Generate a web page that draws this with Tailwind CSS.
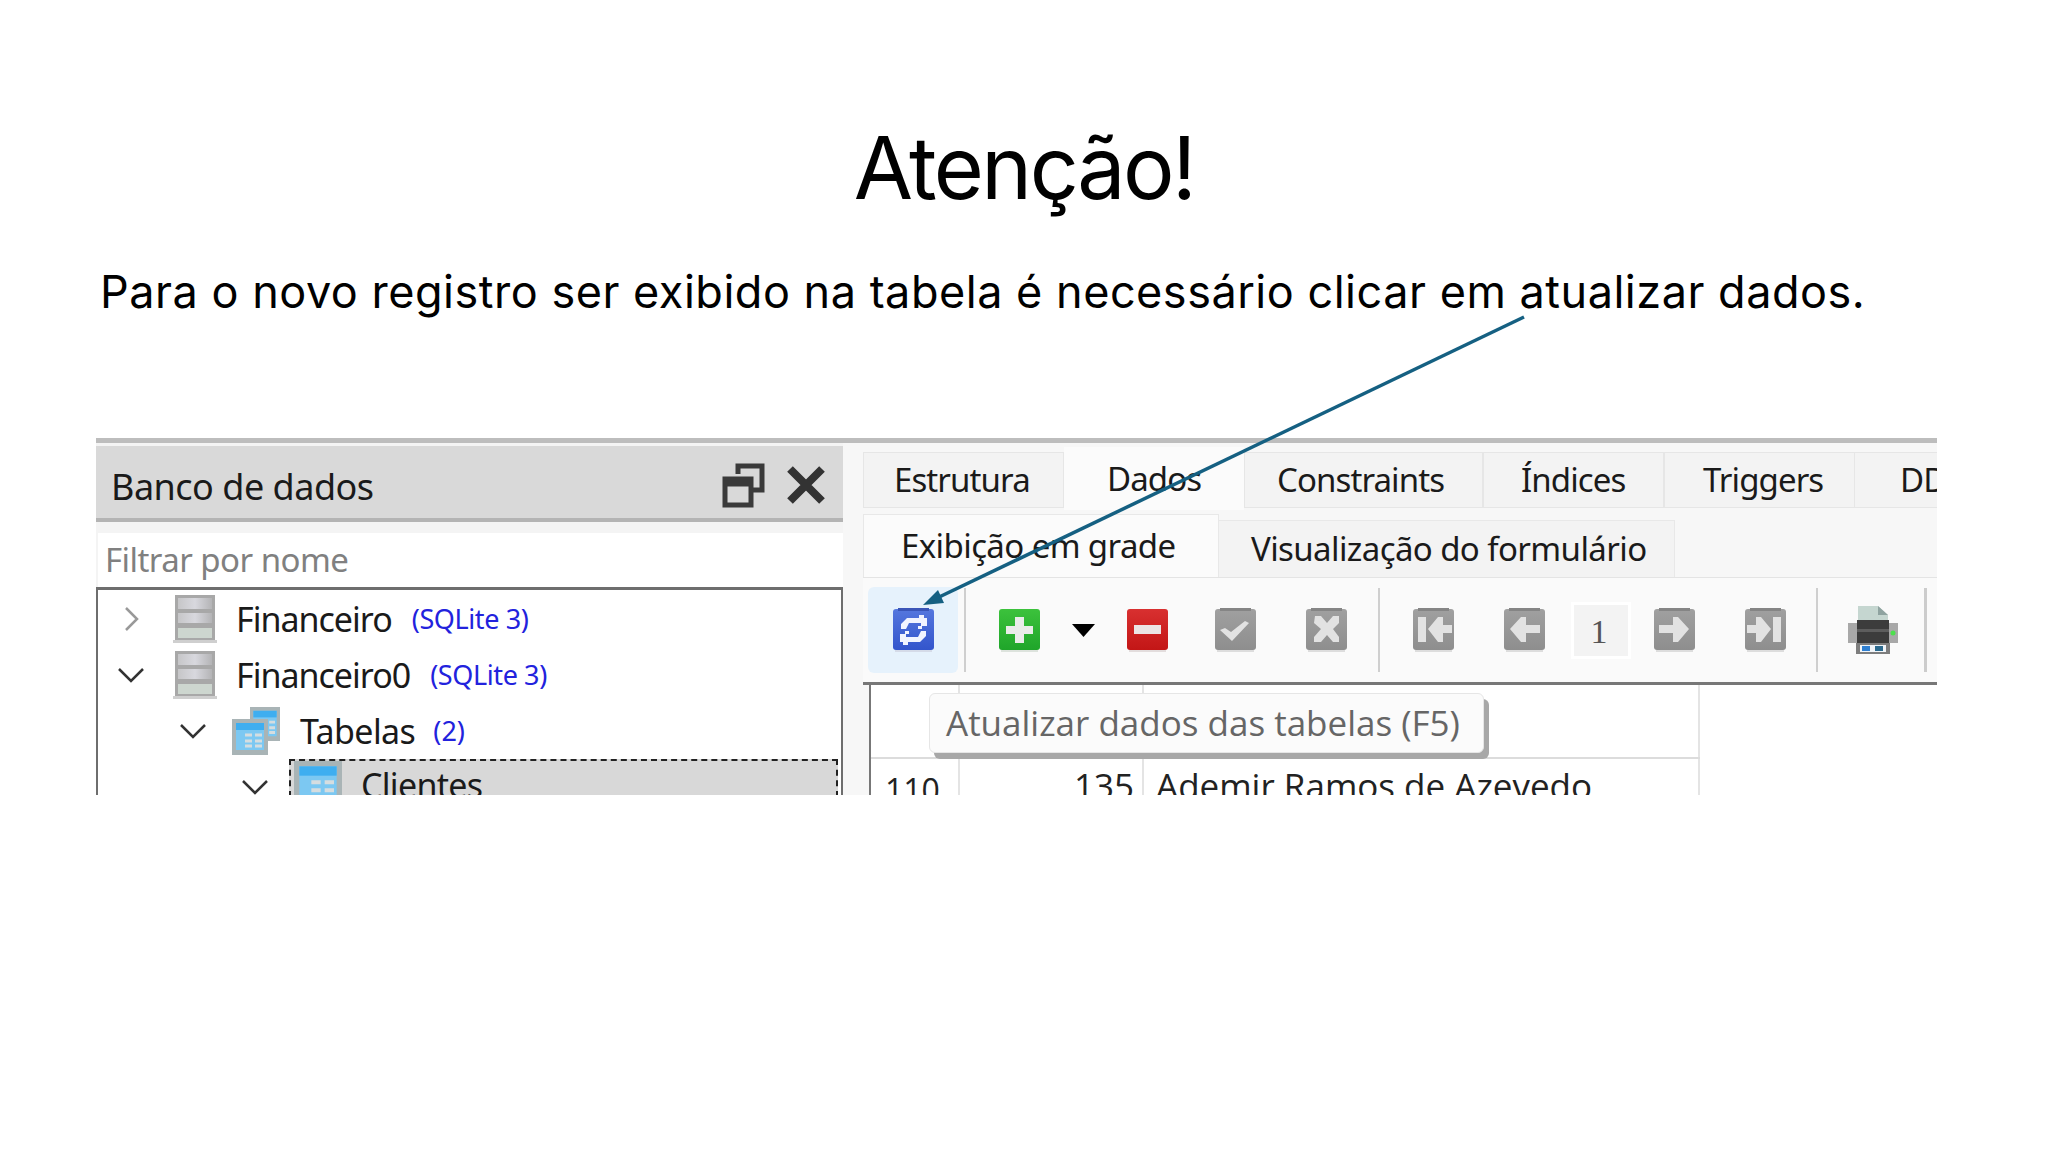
<!DOCTYPE html>
<html lang="pt-BR">
<head>
<meta charset="UTF-8" />
<title>Atenção!</title>
<script src="https://cdn.jsdelivr.net/npm/@tailwindcss/browser@4"></script>
</head>
<body class="bg-white">
<svg width="0" height="0" class="absolute">
  <defs>
    <linearGradient id="gray" x1="0" y1="0" x2="0" y2="1"><stop offset="0" stop-color="#a0a0a0"/><stop offset="1" stop-color="#8e8e8e"/></linearGradient>
    <linearGradient id="blue" x1="0" y1="0" x2="0" y2="1"><stop offset="0" stop-color="#5577de"/><stop offset="1" stop-color="#3355cc"/></linearGradient>
    <linearGradient id="green" x1="0" y1="0" x2="0" y2="1"><stop offset="0" stop-color="#3cc23c"/><stop offset="1" stop-color="#1fa52a"/></linearGradient>
    <linearGradient id="red" x1="0" y1="0" x2="0" y2="1"><stop offset="0" stop-color="#d83030"/><stop offset="1" stop-color="#c31616"/></linearGradient>
    <linearGradient id="drum" x1="0" y1="0" x2="1" y2="0"><stop offset="0" stop-color="#c6c6c8"/><stop offset="0.5" stop-color="#d8d8de"/><stop offset="1" stop-color="#b4b4b6"/></linearGradient>
    <symbol id="db" viewBox="0 0 48 48">
      <rect x="4" y="0" width="40" height="46" fill="#a8a8a8"/>
      <rect x="7" y="3" width="34" height="11" fill="url(#drum)"/>
      <rect x="7" y="18" width="34" height="10" fill="url(#drum)"/>
      <rect x="7" y="33" width="34" height="10" fill="#cdd6cf"/>
      <rect x="2" y="45" width="44" height="3" fill="#cfcfcf"/>
    </symbol>
    <symbol id="tbl" viewBox="0 0 36 36">
      <rect x="0" y="0" width="36" height="36" fill="#a9b4b6"/>
      <rect x="4" y="4" width="28" height="27" fill="#7cc8f2"/>
      <rect x="4" y="4" width="28" height="7" fill="#3eaef0"/>
      <path d="M13 16h7M23 16h7M13 22h7M23 22h7M13 27h7M23 27h7" stroke="#d5dde0" stroke-width="3"/>
    </symbol>
    <symbol id="chev-down" viewBox="0 0 28 16"><path d="M2 2 14 14 26 2" fill="none" stroke="#333" stroke-width="2.500"/></symbol>
    <symbol id="gray-btn" viewBox="0 0 43 44">
      <rect x="1" y="1" width="41" height="41" rx="3" fill="url(#gray)"/>
      <rect x="6" y="0" width="31" height="3" fill="#858585"/>
      <rect x="3" y="42" width="37" height="2" fill="#dddddd"/>
    </symbol>
  </defs>
</svg>

<div class="relative w-[2048px] h-[1152px] overflow-hidden bg-white text-black font-['Open_Sans',sans-serif]">

  <h1 class="pt-[112px] text-center text-[86px] leading-[112px] tracking-[-2.5px] font-normal font-['Inter',sans-serif]">Atenção!</h1>
  <p class="mt-[38px] pl-[100px] text-[45px] leading-[60px] whitespace-nowrap tracking-[0.52px] font-['Inter',sans-serif]">Para o novo registro ser exibido na tabela é necessário clicar em atualizar dados.</p>

  <!-- screenshot do programa, cortado embaixo -->
  <div class="ml-[96px] mt-[116px] w-[1841px] h-[357px] overflow-hidden bg-[#f4f4f4] text-[#1a1a1a] font-['Noto_Sans',sans-serif]">
    <div class="h-[5px] bg-[#bdbdbd]"></div>
    <div class="flex h-[352px]">

      <!-- painel esquerdo -->
      <div class="w-[747px] shrink-0 flex flex-col">
        <div class="shrink-0 mt-[3px] h-[76px] flex items-center pl-[15px] pr-[17px] bg-[#d9d9d9] border-b-4 border-[#b4b4b4]">
          <span class="pt-[10px] text-[36px] tracking-[-0.5px] flex-1">Banco de dados</span>
          <svg class="mt-[6px] w-[44px] h-[46px]" viewBox="0 0 44 46" fill="none" stroke="#3a3a3a" stroke-width="5">
            <path d="M16 12V4h24v24h-10"/><rect x="3" y="17" width="26" height="26"/><path d="M3 20h26" stroke-width="9"/>
          </svg>
          <svg class="ml-[20px] mt-[6px] w-[40px] h-[40px]" viewBox="0 0 40 40" fill="none" stroke="#333" stroke-width="8"><path d="M4 4l32 32M36 4 4 36"/></svg>
        </div>
        <div class="shrink-0 mt-[11px] ml-[2px] h-[54px] bg-white flex items-center pl-[7px] text-[33px] tracking-[-0.55px] text-[#808080]">Filtrar por nome</div>
        <div class="flex-1 min-h-0 overflow-hidden pt-[1px] bg-white border-t-[3px] border-l-2 border-r-2 border-[#6e6e6e] pr-[3px]">
          <div class="h-[56px] flex items-center">
            <svg class="ml-[26px] w-[15px] h-[26px]" viewBox="0 0 15 26"><path d="M2 2 13 13 2 24" fill="none" stroke="#999" stroke-width="2.500"/></svg>
            <svg class="ml-[32px] w-[48px] h-[48px]"><use href="#db"/></svg>
            <span class="ml-[17px] text-[34px] tracking-[-1px]">Financeiro</span>
            <span class="ml-[20px] text-[27px] tracking-[-0.4px] text-[#2222dd]">(SQLite 3)</span>
          </div>
          <div class="h-[56px] flex items-center">
            <svg class="ml-[19px] w-[28px] h-[16px]"><use href="#chev-down"/></svg>
            <svg class="ml-[26px] w-[48px] h-[48px]"><use href="#db"/></svg>
            <span class="ml-[17px] text-[34px] tracking-[-1px]">Financeiro0</span>
            <span class="ml-[20px] text-[27px] tracking-[-0.4px] text-[#2222dd]">(SQLite 3)</span>
          </div>
          <div class="h-[56px] flex items-center">
            <svg class="ml-[81px] w-[28px] h-[16px]"><use href="#chev-down"/></svg>
            <svg class="ml-[25px] w-[50px] h-[48px]" viewBox="0 0 50 48">
              <svg x="18" y="0" width="30" height="34" viewBox="0 0 36 36" preserveAspectRatio="none"><use href="#tbl"/></svg>
              <svg x="0" y="12" width="36" height="36" viewBox="0 0 36 36"><use href="#tbl"/></svg>
            </svg>
            <span class="ml-[18px] text-[34px] tracking-[-0.6px]">Tabelas</span>
            <span class="ml-[18px] text-[27px] text-[#2222dd]">(2)</span>
          </div>
          <div class="h-[56px] flex items-start">
            <svg class="ml-[143px] mt-[20px] w-[28px] h-[16px]"><use href="#chev-down"/></svg>
            <div class="ml-[20px] flex-1 h-[70px] bg-[#d8d8d8] border-2 border-dashed border-[#222] flex items-start">
              <svg class="w-[48px] h-[48px] ml-[3px]"><use href="#tbl"/></svg>
              <span class="ml-[19px] text-[34px] tracking-[-0.7px] leading-[48px]">Clientes</span>
            </div>
          </div>
        </div>
      </div>

      <!-- painel direito -->
      <div class="flex-1 min-w-0 pl-[20px] flex flex-col bg-[#f7f7f7]">
        <div class="shrink-0 h-[67px] flex items-end text-[33px] tracking-[-0.9px] whitespace-nowrap">
          <div class="w-[201px] h-[56px] mb-[2px] flex items-center pl-[30px] bg-[#f3f3f3] border border-[#e6e6e6]">Estrutura</div>
          <div class="w-[180px] h-[63px] flex items-center pl-[43px] bg-[#fbfbfb]">Dados</div>
          <div class="w-[239px] h-[56px] mb-[2px] flex items-center pl-[32px] bg-[#f3f3f3] border border-[#e6e6e6]">Constraints</div>
          <div class="w-[181px] h-[56px] mb-[2px] flex items-center pl-[37px] bg-[#f3f3f3] border border-[#e6e6e6]">Índices</div>
          <div class="w-[191px] h-[56px] mb-[2px] flex items-center pl-[38px] bg-[#f3f3f3] border border-[#e6e6e6]">Triggers</div>
          <div class="flex-1 min-w-0 h-[56px] mb-[2px] flex items-center pl-[45px] overflow-hidden bg-[#f3f3f3] border-y border-[#e6e6e6]">DD</div>
        </div>
        <div class="shrink-0 h-[68px] flex items-end text-[33px] tracking-[-0.6px] whitespace-nowrap border-b border-[#e4e4e4]">
          <div class="w-[356px] h-[63px] flex items-center pl-[37px] bg-[#fbfbfb] border-x border-t border-[#e8e8e8]">Exibição em grade</div>
          <div class="w-[456px] h-[57px] flex items-center pl-[32px] bg-[#f3f3f3] border-r border-t border-[#e8e8e8]">Visualização do formulário</div>
        </div>

        <div class="shrink-0 h-[107px] flex items-center bg-[#fafafa] border-b-[3px] border-[#777]">
          <div class="ml-[5px] w-[90px] h-[86px] rounded-md bg-[#e6f2fc] flex items-center justify-center">
            <svg class="w-[43px] h-[44px]" viewBox="0 0 43 44">
              <rect x="1" y="1" width="41" height="41" rx="3" fill="url(#blue)"/>
              <rect x="6" y="0" width="31" height="3" fill="#3a55b8"/>
              <rect x="3" y="42" width="37" height="2" fill="#d5dbe8"/>
              <path d="M9 21v-5l6-6h12V7h5v3h3v8h-5v3h-4v-3h3v-3H17l-3 6zM34 23v5l-6 6H16v3h-5v-3H8v-8h5v-3h4v3h-3v3h12l3-6z" fill="#f1f4ff"/>
            </svg>
          </div>
          <div class="ml-[6px] w-[2px] h-[84px] bg-[#cfcfcf]"></div>
          <svg class="ml-[32px] w-[43px] h-[44px]" viewBox="0 0 43 44">
            <rect x="1" y="1" width="41" height="41" rx="3" fill="url(#green)"/>
            <rect x="3" y="42" width="37" height="2" fill="#dde3dd"/>
            <path d="M17 9h9v9h9v8h-9v9h-9v-9H8v-8h9z" fill="#e9ece9"/>
          </svg>
          <svg class="ml-[31px] w-[23px] h-[13px]" viewBox="0 0 23 13"><path d="M0 0h23L11.500 13z" fill="#000"/></svg>
          <svg class="ml-[31px] w-[43px] h-[44px]" viewBox="0 0 43 44">
            <rect x="1" y="1" width="41" height="41" rx="3" fill="url(#red)"/>
            <rect x="3" y="42" width="37" height="2" fill="#e3dddd"/>
            <rect x="8" y="17" width="27" height="9" fill="#ece4e4"/>
          </svg>
          <svg class="ml-[45px] w-[43px] h-[44px]" viewBox="0 0 43 44">
            <use href="#gray-btn"/>
            <path d="M6 22l5-2 6 4 14-11 4 2-17 18z" fill="#e2e2e2"/>
          </svg>
          <svg class="ml-[48px] w-[43px] h-[44px]" viewBox="0 0 43 44">
            <use href="#gray-btn"/>
            <path d="M10 8h6l6 7 6-7h6v7l-6 6 6 8v5h-6l-6-7-6 7h-7v-5l7-8-7-6z" fill="#e2e2e2"/>
          </svg>
          <div class="ml-[30px] w-[2px] h-[84px] bg-[#cfcfcf]"></div>
          <svg class="ml-[32px] w-[43px] h-[44px]" viewBox="0 0 43 44">
            <use href="#gray-btn"/>
            <path d="M6 9h8v25H6zM16 21 26 9h5v8h9v8h-9v9h-5z" fill="#e2e2e2"/>
          </svg>
          <svg class="ml-[48px] w-[43px] h-[44px]" viewBox="0 0 43 44">
            <use href="#gray-btn"/>
            <path d="M7 21 18 9h5v8h14v8H23v9h-5z" fill="#e2e2e2"/>
          </svg>
          <div class="ml-[25px] w-[60px] h-[57px] pt-[3px] pr-[4px] flex items-center justify-center bg-[#f3f3f3] border-[3px] border-white text-[34px] text-[#555] font-['Liberation_Serif',serif]">1</div>
          <svg class="ml-[22px] w-[43px] h-[44px]" viewBox="0 0 43 44">
            <use href="#gray-btn"/>
            <path d="M36 21 25 9h-5v8H6v8h14v9h5z" fill="#e2e2e2"/>
          </svg>
          <svg class="ml-[48px] w-[43px] h-[44px]" viewBox="0 0 43 44">
            <use href="#gray-btn"/>
            <path d="M37 9h-8v25h8zM27 21 17 9h-5v8H3v8h9v9h5z" fill="#e2e2e2"/>
          </svg>
          <div class="ml-[29px] w-[2px] h-[84px] bg-[#cfcfcf]"></div>
          <svg class="ml-[30px] w-[50px] h-[50px]" viewBox="0 0 50 50">
            <path d="M10 1h20l10 9v14H10z" fill="#c5d6d0"/><path d="M30 1l10 9H30z" fill="#8fa3a0"/>
            <rect x="0" y="18" width="50" height="20" fill="#a8a8a8"/>
            <rect x="9" y="15" width="32" height="23" fill="#3c3c3c"/><rect x="9" y="24" width="32" height="3" fill="#5d5d5d"/>
            <circle cx="45" cy="28" r="2.500" fill="#4de04d"/>
            <rect x="8" y="38" width="34" height="11" fill="#7d7d7d"/>
            <rect x="12" y="40" width="26" height="7" fill="#f0f4f8"/><rect x="14" y="41" width="8" height="5" fill="#2f7fd0"/><rect x="27" y="41" width="8" height="5" fill="#2c6a8e"/>
          </svg>
          <div class="ml-[26px] w-[3px] h-[84px] bg-[#cccccc]"></div>
        </div>

        <!-- grade de dados -->
        <div class="relative flex-1 min-h-0 ml-[6px] bg-white border-l-2 border-[#777] text-[35px] text-[#222] font-['Open_Sans',sans-serif]">
          <div class="flex h-[74px] border-b-2 border-[#dcdcdc] w-[829px]">
            <div class="w-[89px] border-r-2 border-[#e4e4e4]"></div>
            <div class="w-[184px] border-r-2 border-[#e4e4e4]"></div>
            <div class="flex-1 border-r-2 border-[#e4e4e4]"></div>
          </div>
          <div class="flex h-[50px] w-[829px]">
            <div class="w-[89px] pl-[14px] border-r-2 border-[#e4e4e4] h-full leading-[62px] text-[32px]">110</div>
            <div class="w-[184px] pr-[8px] text-right border-r-2 border-[#e4e4e4] h-full leading-[54px]">135</div>
            <div class="flex-1 pl-[12px] border-r-2 border-[#e4e4e4] h-full leading-[54px] whitespace-nowrap">Ademir Ramos de Azevedo</div>
          </div>
          <div class="absolute left-[58px] top-[8px] w-[555px] h-[60px] flex items-center pl-[16px] bg-[#fbfbfb] border border-[#e6e6e6] rounded-md shadow-[5px_6px_0_#a8a8a8] text-[#666] whitespace-nowrap">Atualizar dados das tabelas (F5)</div>
        </div>
      </div>
    </div>
  </div>

  <!-- seta sobre o slide -->
  <svg class="absolute inset-0 pointer-events-none" width="2048" height="1152" viewBox="0 0 2048 1152">
    <line x1="1524" y1="317" x2="935" y2="599" stroke="#156082" stroke-width="3.500"/>
    <path d="M923 605 L938 590 L944 603 Z" fill="#156082"/>
  </svg>
</div>
</body>
</html>
